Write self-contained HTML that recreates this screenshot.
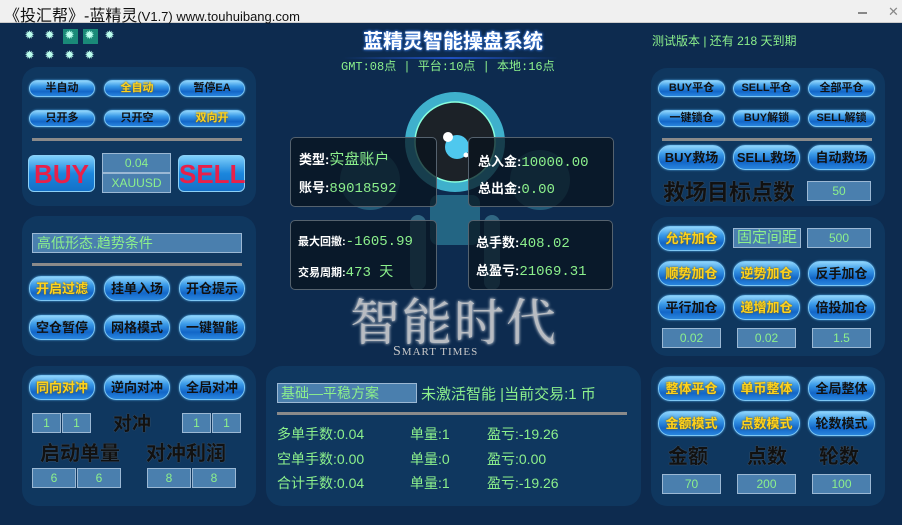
<!DOCTYPE html>
<html><head><meta charset="utf-8">
<style>
*{margin:0;padding:0;box-sizing:border-box}
body{width:902px;height:525px;overflow:hidden;background:#0d2b4f;font-family:"Liberation Sans","Noto Sans CJK SC",sans-serif;position:relative}
.a{position:absolute}
.tb{left:0;top:0;width:902px;height:23px;background:#f0f0f0;border-bottom:1px solid #ccc}
.p{position:absolute;background:#0f375f;border-radius:16px}
.b{position:absolute;border-radius:12px;background:linear-gradient(#8fd4fb 0%,#3a9ae8 35%,#1266c8 70%,#2a86de 100%);border:1px solid #7cc6f4;box-shadow:0 0 2px #4aa0e0;color:#111;font-weight:bold;text-align:center;font-size:11px;white-space:nowrap}
.b.s{height:17px;line-height:15px}
.b.l{height:25px;line-height:23px;font-size:13px}
.y{color:#ffd21a;text-shadow:0 0 2px #7a5a00}
.bx{position:absolute;background:#4a7fae;border:1px solid #9bb8d4;color:#8cf08c;text-align:center;font-size:12px;height:20px;line-height:18px}
.g{color:#8cf08c}
.ln{position:absolute;height:3px;background:#8a8a8a}
.big{position:absolute;color:#111;font-weight:bold;text-shadow:0 0 1px #777;white-space:nowrap}
.star{position:absolute;width:11px;height:11px;color:#bfe;font-size:12px;line-height:11px;text-align:center}
.card{position:absolute;background:rgba(8,18,28,.72);border:1px solid #55626e;border-radius:5px}
.ct{position:absolute;color:#fff;font-weight:bold;font-size:13px;white-space:nowrap}
.cv{font-family:"Liberation Mono","Noto Sans CJK SC",monospace;color:#8cf08c;font-weight:normal;font-size:14px}
</style></head><body>
<div class="a tb"></div>
<div class="a" style="left:4px;top:2px;font-size:16px;color:#111;white-space:nowrap">《投汇帮》-蓝精灵<span style="font-size:13px">(V1.7) www.touhuibang.com</span></div>
<div class="a" style="left:858px;top:12px;width:9px;height:2px;background:#888"></div>
<div class="a" style="left:888px;top:4px;font-size:13px;color:#888">✕</div>

<div class="a" style="left:63px;top:29px;width:15px;height:15px;background:#1a8a78"></div>
<div class="a" style="left:83px;top:29px;width:15px;height:15px;background:#1a8a78"></div>
<div class="star" style="left:24px;top:30px">✹</div><div class="star" style="left:44px;top:30px">✹</div><div class="star" style="left:64px;top:30px">✹</div><div class="star" style="left:84px;top:30px">✹</div><div class="star" style="left:104px;top:30px">✹</div>
<div class="star" style="left:24px;top:50px">✹</div><div class="star" style="left:44px;top:50px">✹</div><div class="star" style="left:64px;top:50px">✹</div><div class="star" style="left:84px;top:50px">✹</div>

<div class="a" style="left:363px;top:25px;font-size:20px;font-weight:bold;color:#fff;text-shadow:0 0 3px #3a7ae0,0 0 2px #3a7ae0;white-space:nowrap">蓝精灵智能操盘系统</div>
<div class="a" style="left:343px;top:57px;width:215px;height:2px;background:linear-gradient(90deg,transparent,#2050c0,transparent)"></div>
<div class="a g" style="left:341px;top:57px;font-size:12px;font-family:'Liberation Mono','Noto Sans CJK SC',monospace;white-space:nowrap">GMT:08点 | 平台:10点 | 本地:16点</div>
<div class="a g" style="left:652px;top:32px;font-size:12px;white-space:nowrap">测试版本 | 还有 218 天到期</div>

<div class="p" style="left:22px;top:67px;width:234px;height:139px"></div>
<div class="p" style="left:22px;top:216px;width:234px;height:140px"></div>
<div class="p" style="left:22px;top:366px;width:234px;height:140px"></div>
<div class="p" style="left:266px;top:366px;width:375px;height:140px"></div>
<div class="p" style="left:651px;top:68px;width:234px;height:138px"></div>
<div class="p" style="left:651px;top:217px;width:234px;height:139px"></div>
<div class="p" style="left:651px;top:367px;width:234px;height:139px"></div>

<div class="b s" style="left:29px;top:80px;width:66px">半自动</div>
<div class="b s y" style="left:104px;top:80px;width:66px">全自动</div>
<div class="b s" style="left:179px;top:80px;width:66px">暂停EA</div>
<div class="b s" style="left:29px;top:110px;width:66px">只开多</div>
<div class="b s" style="left:104px;top:110px;width:66px">只开空</div>
<div class="b s y" style="left:179px;top:110px;width:66px">双向开</div>
<div class="ln" style="left:32px;top:138px;width:210px"></div>
<div class="a" style="left:28px;top:155px;width:67px;height:37px;border-radius:6px;background:linear-gradient(#7fd0fb,#1b86dd 50%,#1470c8);border:1px solid #8cd0f6;color:#e8204a;font-weight:bold;font-size:26px;text-align:center;line-height:36px">BUY</div>
<div class="a" style="left:178px;top:155px;width:67px;height:37px;border-radius:6px;background:linear-gradient(#7fd0fb,#1b86dd 50%,#1470c8);border:1px solid #8cd0f6;color:#e8204a;font-weight:bold;font-size:26px;text-align:center;line-height:36px">SELL</div>
<div class="bx" style="left:102px;top:153px;width:69px">0.04</div>
<div class="bx" style="left:102px;top:173px;width:69px">XAUUSD</div>

<div class="bx" style="left:32px;top:233px;width:210px;text-align:left;padding-left:4px;font-size:14px">高低形态.趋势条件</div>
<div class="ln" style="left:32px;top:263px;width:210px"></div>
<div class="b l y" style="left:29px;top:276px;width:66px">开启过滤</div>
<div class="b l" style="left:104px;top:276px;width:66px">挂单入场</div>
<div class="b l" style="left:179px;top:276px;width:66px">开仓提示</div>
<div class="b l" style="left:29px;top:315px;width:66px">空仓暂停</div>
<div class="b l" style="left:104px;top:315px;width:66px">网格模式</div>
<div class="b l" style="left:179px;top:315px;width:66px">一键智能</div>

<div class="b l y" style="left:29px;top:375px;width:66px">同向对冲</div>
<div class="b l" style="left:104px;top:375px;width:66px">逆向对冲</div>
<div class="b l" style="left:179px;top:375px;width:66px">全局对冲</div>
<div class="bx" style="left:32px;top:413px;width:29px">1</div>
<div class="bx" style="left:62px;top:413px;width:29px">1</div>
<div class="bx" style="left:182px;top:413px;width:29px">1</div>
<div class="bx" style="left:212px;top:413px;width:29px">1</div>
<div class="big" style="left:113px;top:409px;font-size:19px">对冲</div>
<div class="big" style="left:40px;top:437px;font-size:20px">启动单量</div>
<div class="big" style="left:146px;top:437px;font-size:20px">对冲利润</div>
<div class="bx" style="left:32px;top:468px;width:44px">6</div>
<div class="bx" style="left:77px;top:468px;width:44px">6</div>
<div class="bx" style="left:147px;top:468px;width:44px">8</div>
<div class="bx" style="left:192px;top:468px;width:44px">8</div>

<svg class="a" style="left:290px;top:85px" width="330" height="210">
<ellipse cx="80" cy="95" rx="30" ry="30" fill="#3a8aa0" opacity=".5"/>
<ellipse cx="250" cy="95" rx="30" ry="30" fill="#3a8aa0" opacity=".5"/>
<rect x="140" y="110" width="50" height="50" rx="8" fill="#3aa0b8" opacity=".5"/>
<rect x="120" y="130" width="16" height="75" rx="8" fill="#5ab0c0" opacity=".45"/>
<rect x="194" y="130" width="16" height="75" rx="8" fill="#5ab0c0" opacity=".45"/>
<circle cx="165" cy="57" r="50" fill="#3fb0cc"/>
<circle cx="165" cy="57" r="40" fill="#1c2228" stroke="#8fd" stroke-width="1.5"/>
<circle cx="167" cy="62" r="12" fill="#4fc8ee"/>
<circle cx="158" cy="52" r="5" fill="#fff"/>
<circle cx="176" cy="70" r="2.5" fill="#fff"/>
</svg>

<div class="card" style="left:290px;top:137px;width:147px;height:70px"></div>
<div class="card" style="left:468px;top:137px;width:146px;height:70px"></div>
<div class="card" style="left:290px;top:220px;width:147px;height:70px"></div>
<div class="card" style="left:468px;top:220px;width:145px;height:70px"></div>
<div class="ct" style="left:299px;top:148px">类型:<span class="cv" style="font-family:'Liberation Sans','Noto Sans CJK SC',sans-serif;font-size:15px">实盘账户</span></div>
<div class="ct" style="left:299px;top:177px">账号:<span class="cv">89018592</span></div>
<div class="ct" style="left:478px;top:151px">总入金:<span class="cv">10000.00</span></div>
<div class="ct" style="left:478px;top:178px">总出金:<span class="cv">0.00</span></div>
<div class="ct" style="left:298px;top:233px;font-size:11px">最大回撤:<span class="cv">-1605.99</span></div>
<div class="ct" style="left:298px;top:261px;font-size:11px">交易周期:<span class="cv">473 天</span></div>
<div class="ct" style="left:476px;top:232px">总手数:<span class="cv">408.02</span></div>
<div class="ct" style="left:476px;top:260px">总盈亏:<span class="cv">21069.31</span></div>

<div class="a" style="left:350px;top:283px;font-size:50px;font-family:'Noto Serif CJK SC',serif;color:#b8bcc2;text-shadow:0 0 3px #fff;letter-spacing:2px;white-space:nowrap">智能时代</div>
<div class="a" style="left:393px;top:344px;font-family:'Liberation Serif',serif;font-size:14px;color:#c8c8c8;letter-spacing:1px;white-space:nowrap">S<span style="font-size:11px">MART TIMES</span></div>

<div class="bx" style="left:277px;top:383px;width:140px;text-align:left;padding-left:3px;font-size:14px">基础—平稳方案</div>
<div class="a g" style="left:421px;top:383px;font-size:15px;white-space:nowrap">未激活智能 |当前交易:1 币</div>
<div class="ln" style="left:277px;top:412px;width:350px"></div>
<div class="a g" style="left:277px;top:422px;font-size:14px;line-height:24.5px;white-space:nowrap">多单手数:0.04<br>空单手数:0.00<br>合计手数:0.04</div>
<div class="a g" style="left:410px;top:422px;font-size:14px;line-height:24.5px;white-space:nowrap">单量:1<br>单量:0<br>单量:1</div>
<div class="a g" style="left:487px;top:422px;font-size:14px;line-height:24.5px;white-space:nowrap">盈亏:-19.26<br>盈亏:0.00<br>盈亏:-19.26</div>

<div class="b s" style="left:658px;top:80px;width:67px">BUY平仓</div>
<div class="b s" style="left:733px;top:80px;width:67px">SELL平仓</div>
<div class="b s" style="left:808px;top:80px;width:67px">全部平仓</div>
<div class="b s" style="left:658px;top:110px;width:67px">一键锁仓</div>
<div class="b s" style="left:733px;top:110px;width:67px">BUY解锁</div>
<div class="b s" style="left:808px;top:110px;width:67px">SELL解锁</div>
<div class="ln" style="left:662px;top:138px;width:210px"></div>
<div class="b l" style="left:658px;top:145px;width:67px">BUY救场</div>
<div class="b l" style="left:733px;top:145px;width:67px">SELL救场</div>
<div class="b l" style="left:808px;top:145px;width:67px">自动救场</div>
<div class="big" style="left:663px;top:175px;font-size:22px">救场目标点数</div>
<div class="bx" style="left:807px;top:181px;width:64px">50</div>

<div class="b l y" style="left:658px;top:226px;width:67px">允许加仓</div>
<div class="bx" style="left:733px;top:228px;width:68px;font-size:15px">固定间距</div>
<div class="bx" style="left:807px;top:228px;width:64px">500</div>
<div class="b l y" style="left:658px;top:261px;width:67px">顺势加仓</div>
<div class="b l y" style="left:733px;top:261px;width:67px">逆势加仓</div>
<div class="b l" style="left:808px;top:261px;width:67px">反手加仓</div>
<div class="b l" style="left:658px;top:295px;width:67px">平行加仓</div>
<div class="b l y" style="left:733px;top:295px;width:67px">递增加仓</div>
<div class="b l" style="left:808px;top:295px;width:67px">倍投加仓</div>
<div class="bx" style="left:662px;top:328px;width:59px">0.02</div>
<div class="bx" style="left:737px;top:328px;width:59px">0.02</div>
<div class="bx" style="left:812px;top:328px;width:59px">1.5</div>

<div class="b l y" style="left:658px;top:376px;width:67px">整体平仓</div>
<div class="b l y" style="left:733px;top:376px;width:67px">单币整体</div>
<div class="b l" style="left:808px;top:376px;width:67px">全局整体</div>
<div class="b l y" style="left:658px;top:411px;width:67px">金额模式</div>
<div class="b l y" style="left:733px;top:411px;width:67px">点数模式</div>
<div class="b l" style="left:808px;top:411px;width:67px">轮数模式</div>
<div class="big" style="left:668px;top:440px;font-size:20px">金额</div>
<div class="big" style="left:747px;top:440px;font-size:20px">点数</div>
<div class="big" style="left:819px;top:440px;font-size:20px">轮数</div>
<div class="bx" style="left:662px;top:474px;width:59px">70</div>
<div class="bx" style="left:737px;top:474px;width:59px">200</div>
<div class="bx" style="left:812px;top:474px;width:59px">100</div>
</body></html>
